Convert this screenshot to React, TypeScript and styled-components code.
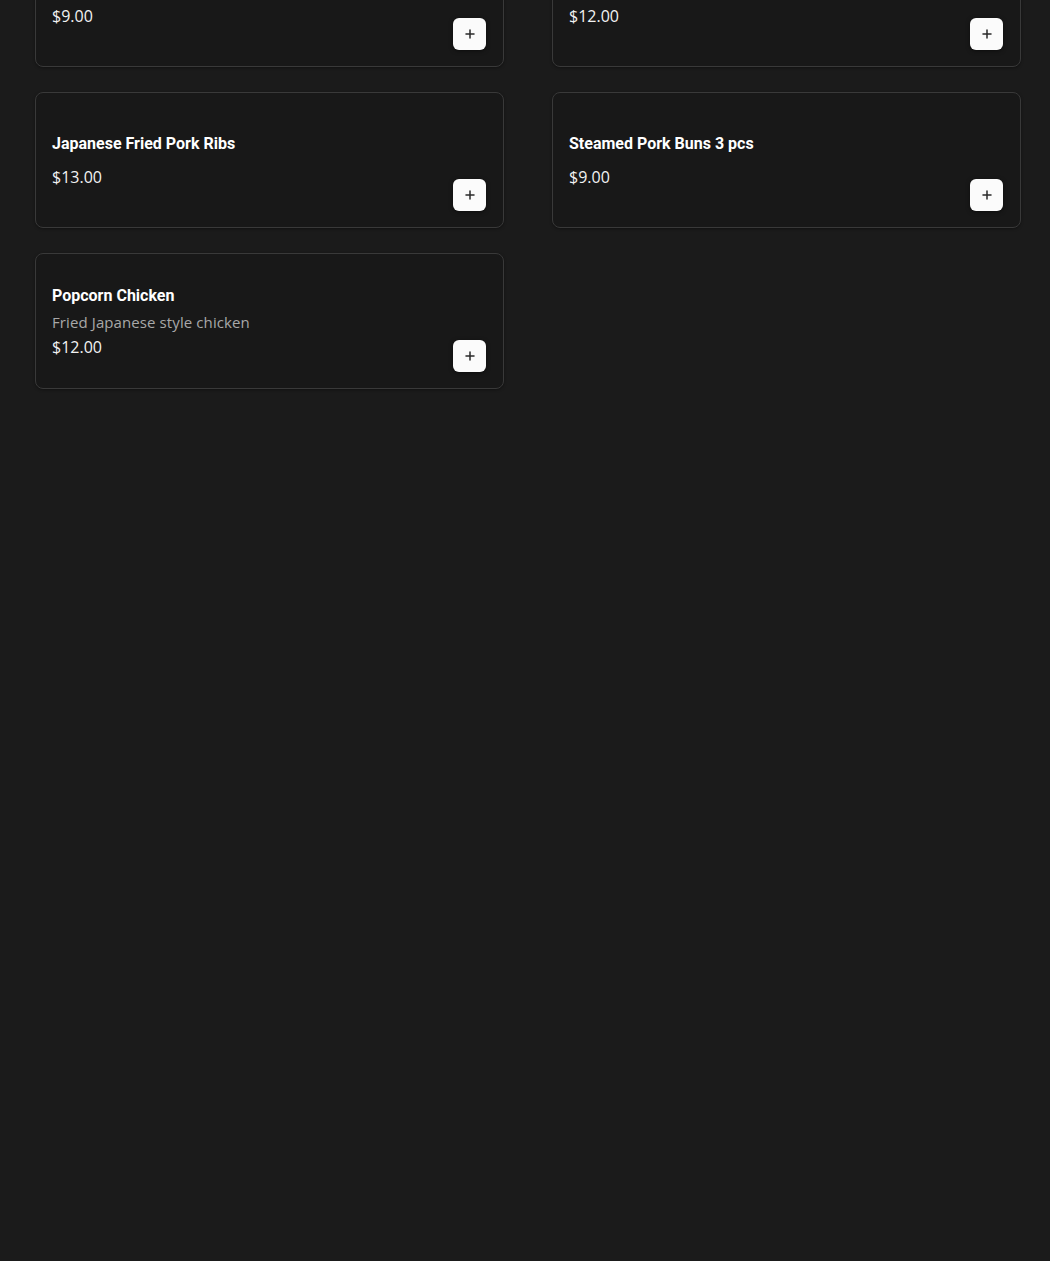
import React from "react";
import styled, { createGlobalStyle } from "styled-components";

type Item = {
  name: string;
  description?: string;
  price: number;
};

const items: Item[] = [
  { name: "Gyoza 6 pcs", price: 9 },
  { name: "Takoyaki 6 pcs", price: 12 },
  { name: "Japanese Fried Pork Ribs", price: 13 },
  { name: "Steamed Pork Buns 3 pcs", price: 9 },
  { name: "Popcorn Chicken", description: "Fried Japanese style chicken", price: 12 },
];

const GlobalStyle = createGlobalStyle`
  html, body {
    margin: 0;
    padding: 0;
    background: #1b1b1b;
    min-height: 100%;
  }
  body {
    font-family: "Open Sans", "Liberation Sans", sans-serif;
    color: #fff;
    overflow: hidden;
  }
`;

const PlusIcon = () => (
  <svg width="10" height="10" viewBox="0 0 10 10" fill="none">
    <path d="M5 1v8M1 5h8" stroke="#2a2a2a" strokeWidth="1.5" strokeLinecap="round" />
  </svg>
);

const MenuCard = ({ item }: { item: Item }) => (
  <Card>
    <Info>
      <Title $withDescription={!!item.description}>{item.name}</Title>
      {item.description && <Description>{item.description}</Description>}
      <Price>${item.price.toFixed(2)}</Price>
    </Info>
    <AddButton aria-label={`Add ${item.name}`}>
      <PlusIcon />
    </AddButton>
  </Card>
);

const App = () => {
  return (
    <Page>
      <GlobalStyle />
      <Grid>
        {items.map((item) => (
          <MenuCard key={item.name} item={item} />
        ))}
      </Grid>
    </Page>
  );
};

export default App;

const Page = styled.div`
  min-height: 1261px;
  background: #1b1b1b;
  padding: 0 29px 0 35px;
  box-sizing: border-box;
`;

// the list is scrolled: the first row sits partly above the viewport
const Grid = styled.div`
  display: grid;
  grid-template-columns: 1fr 1fr;
  column-gap: 48px;
  row-gap: 25px;
  margin-top: -69px;
`;

const Card = styled.div`
  display: flex;
  justify-content: space-between;
  height: 136px;
  box-sizing: border-box;
  padding: 16px;
  background: #181818;
  border: 1px solid #393939;
  border-radius: 8px;
  box-shadow: 0 1px 3px rgba(0, 0, 0, 0.35);
`;

const Info = styled.div`
  display: flex;
  flex-direction: column;
  align-self: center;
  margin-top: 2px;
`;

const Title = styled.div<{ $withDescription: boolean }>`
  font-family: Roboto, "Liberation Sans", sans-serif;
  font-weight: 700;
  font-size: 16px;
  line-height: 20px;
  color: #fff;
  margin-bottom: ${({ $withDescription }) => ($withDescription ? "6px" : "12px")};
`;

const Description = styled.div`
  font-size: 15px;
  line-height: 20px;
  letter-spacing: 0.1px;
  color: #a8a8a8;
  margin-bottom: 4px;
`;

const Price = styled.div`
  font-size: 16px;
  line-height: 22px;
  color: #f2f2f2;
`;

const AddButton = styled.button`
  align-self: flex-end;
  display: flex;
  align-items: center;
  justify-content: center;
  width: 33px;
  height: 32px;
  padding: 0;
  margin-right: 1px;
  border: none;
  border-radius: 6px;
  background: #fbfbfb;
  box-shadow: 0 1px 4px rgba(0, 0, 0, 0.5);
  cursor: pointer;
`;
